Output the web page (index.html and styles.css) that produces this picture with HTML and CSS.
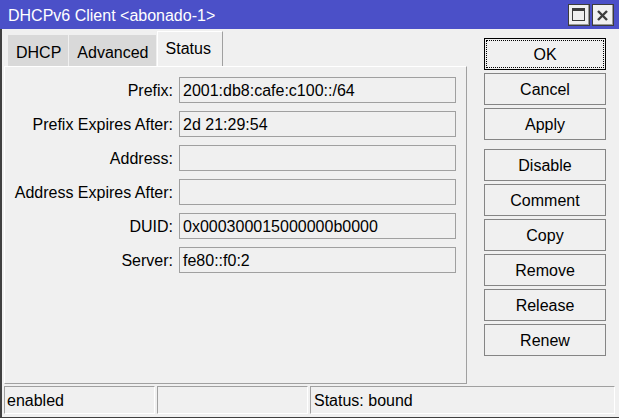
FILE: index.html
```html
<!DOCTYPE html>
<html>
<head>
<meta charset="utf-8">
<link rel="stylesheet" href="styles.css">
</head>
<body>
<div class="window">
  <div class="titlebar">
    <span class="title">DHCPv6 Client &lt;abonado-1&gt;</span>
    <div class="tb-buttons">
      <div class="tb-btn">
        <svg width="20" height="20" viewBox="0 0 20 20">
          <rect x="3.5" y="3.5" width="12" height="12" fill="none" stroke="#3c3c3c" stroke-width="1"/>
          <rect x="3" y="3" width="13" height="3" fill="#3c3c3c"/>
        </svg>
      </div>
      <div class="tb-btn">
        <svg width="20" height="20" viewBox="0 0 20 20">
          <line x1="5" y1="6" x2="14" y2="15" stroke="#3c3c3c" stroke-width="2.4"/>
          <line x1="14" y1="6" x2="5" y2="15" stroke="#3c3c3c" stroke-width="2.4"/>
        </svg>
      </div>
    </div>
  </div>
  <div class="content">
    <div class="main">
      <div class="left">
        <div class="tabs">
          <div class="tab">DHCP</div>
          <div class="tab">Advanced</div>
          <div class="tab active">Status</div>
        </div>
        <div class="panel">
          <div class="form">
            <div class="label">Prefix:</div>
            <div class="field">2001:db8:cafe:c100::/64</div>
            <div class="label">Prefix Expires After:</div>
            <div class="field">2d 21:29:54</div>
            <div class="label">Address:</div>
            <div class="field"></div>
            <div class="label">Address Expires After:</div>
            <div class="field"></div>
            <div class="label">DUID:</div>
            <div class="field">0x000300015000000b0000</div>
            <div class="label">Server:</div>
            <div class="field">fe80::f0:2</div>
          </div>
        </div>
      </div>
      <div class="actions">
        <div class="btn default"><div class="focus">OK</div></div>
        <div class="btn">Cancel</div>
        <div class="btn">Apply</div>
        <div class="btn sep">Disable</div>
        <div class="btn">Comment</div>
        <div class="btn">Copy</div>
        <div class="btn">Remove</div>
        <div class="btn">Release</div>
        <div class="btn">Renew</div>
      </div>
    </div>
    <div class="statusbar">
      <div class="sb sb-small">enabled</div>
      <div class="sb sb-small"></div>
      <div class="sb sb-wide">Status: bound</div>
    </div>
  </div>
</div>
</body>
</html>
```
FILE: styles.css
```css
html, body {
  margin: 0;
  padding: 0;
  background: #f0f0f0;
}
body {
  font-family: "Liberation Sans", Arial, sans-serif;
  font-size: 16px;
  line-height: 18px;
  color: #000;
}
.window {
  width: 619px;
  height: 418px;
  display: flex;
  flex-direction: column;
  overflow: hidden;
}
.titlebar {
  height: 29px;
  flex: none;
  background: #4b50c8;
  color: #fff;
  display: flex;
  align-items: flex-start;
  justify-content: space-between;
  padding: 0 5px 0 8px;
}
.title {
  margin-top: 7px;
  white-space: nowrap;
}
.tb-buttons {
  display: flex;
  gap: 2px;
  margin-top: 4px;
}
.tb-btn {
  width: 22px;
  height: 22px;
  box-sizing: border-box;
  background: #f0f0f0;
  border: 1px solid #3c3c3c;
  box-shadow: inset -1px -1px 0 #9a9a9a;
}
.tb-btn svg {
  display: block;
}
.content {
  flex: 1;
  display: flex;
  flex-direction: column;
  border-left: 2px solid #404040;
  border-bottom: 1px solid #404040;
  min-height: 0;
}
.main {
  flex: 1;
  display: flex;
  min-height: 0;
}
.left {
  width: 463px;
  margin-left: 2px;
  display: flex;
  flex-direction: column;
}
.tabs {
  display: flex;
  align-items: flex-end;
  margin-top: 2px;
  padding-left: 4px;
}
.tab {
  background: #d9d9d9;
  padding: 9px 7px 4px 8px;
  margin-right: 1px;
  white-space: nowrap;
}
.tab.active {
  background: #f0f0f0;
  border-top: 1px solid #fff;
  border-left: 1px solid #fff;
  border-right: 1px solid #a0a0a0;
  padding: 8px 11px 8px 8px;
  margin-right: 0;
}
.panel {
  flex: 1;
  border-top: 1px solid #fff;
  border-left: 1px solid #fff;
  border-right: 1px solid #a0a0a0;
  border-bottom: 1px solid #a0a0a0;
  padding-top: 10px;
}
.form {
  display: grid;
  grid-template-columns: 168px 277px;
  column-gap: 6px;
  row-gap: 8px;
  align-items: center;
}
.label {
  text-align: right;
  white-space: nowrap;
  padding-top: 2px;
}
.field {
  height: 26px;
  box-sizing: border-box;
  border: 1px solid #a0a0a0;
  padding: 4px 3px 2px;
  white-space: nowrap;
}
.actions {
  width: 122px;
  margin-left: 17px;
  margin-top: 9px;
  display: flex;
  flex-direction: column;
  gap: 3px;
}
.btn {
  height: 32px;
  box-sizing: border-box;
  border: 1px solid #858585;
  padding-top: 2px;
  display: flex;
  align-items: center;
  justify-content: center;
}
.btn.default {
  border-color: #000;
  padding: 1px;
  align-items: stretch;
  justify-content: stretch;
}
.focus {
  flex: 1;
  border: 1px dotted #000;
  padding-top: 2px;
  display: flex;
  align-items: center;
  justify-content: center;
}
.btn.sep {
  margin-top: 6px;
}
.statusbar {
  height: 28px;
  flex: none;
  margin: 2px 4px 3px 2px;
  display: flex;
  gap: 2px;
}
.sb {
  box-sizing: border-box;
  border-top: 1px solid #a0a0a0;
  border-left: 1px solid #a0a0a0;
  border-bottom: 1px solid #fff;
  border-right: 1px solid #fff;
  padding-left: 2px;
  padding-top: 2px;
  display: flex;
  align-items: center;
  white-space: nowrap;
}
.sb-small {
  width: 151px;
}
.sb-wide {
  flex: 1;
  padding-left: 3px;
}
```
